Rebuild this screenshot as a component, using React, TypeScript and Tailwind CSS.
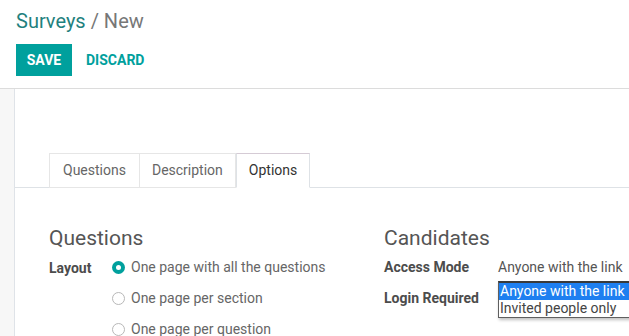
import React from 'react'

function Radio({ checked }: { checked?: boolean }) {
  return checked ? (
    <span className="flex h-[13px] w-[13px] items-center justify-center rounded-full bg-[#00A09D]">
      <span className="h-[5px] w-[5px] rounded-full bg-white" />
    </span>
  ) : (
    <span className="h-[13px] w-[13px] rounded-full border border-[#b8b8b8] bg-white" />
  )
}

const layoutOptions = [
  { label: 'One page with all the questions', checked: true },
  { label: 'One page per section' },
  { label: 'One page per question' },
]

export default function App() {
  return (
    <div className="relative h-[336px] w-[629px] overflow-hidden bg-white font-['Roboto',sans-serif] text-[14px] text-[#666]">
      {/* Control panel */}
      <div className="border-b border-[#dcdcdc] px-4 pt-[9px] pb-[12px]">
        <div className="h-[25px] text-[20px] leading-[25px]">
          <span className="text-[#1f817e]">Surveys</span>
          <span className="text-[#777]"> / New</span>
        </div>
        <div className="mt-[10px] flex items-center gap-[1px]">
          <button className="h-8 w-[56px] bg-[#00A09D] text-[14px] font-bold text-white">SAVE</button>
          <button className="h-8 px-[13px] text-[14px] font-bold text-[#00A09D]">DISCARD</button>
        </div>
      </div>

      {/* Body */}
      <div className="flex h-full">
        <div className="w-[15px] border-r border-[#dfe3e8] bg-[#f7f7f7]" />
        <div className="flex-1">
          {/* Tabs */}
          <div className="mt-[64px] flex border-b border-[#dee2e6] pl-[34px]">
            <div className="-mb-px flex h-[35px] items-center border border-[#e6e6e6] px-[13px] text-[#666]">Questions</div>
            <div className="-mb-px flex h-[35px] items-center border-y border-r border-[#e6e6e6] px-[12px] text-[#666]">Description</div>
            <div className="-mb-px flex h-[35px] items-center border border-b-white border-x-[#dee2e6] border-t-[#d5cbd5] bg-white px-[12px] text-[#333]">Options</div>
          </div>

          {/* Options content */}
          <div className="mt-[38px] flex pl-[34px]">
            <div className="w-[335px]">
              <div className="h-6 text-[21px] leading-6 text-[#555]">Questions</div>
              <div className="mt-[2px] flex">
                <div className="w-[63px] pt-[6px] font-bold text-[#4c4c4c]">Layout</div>
                <div className="flex flex-col">
                  {layoutOptions.map((o) => (
                    <div key={o.label} className="flex h-[31px] items-center gap-[6px]">
                      <Radio checked={o.checked} />
                      <span className="text-[#666]">{o.label}</span>
                    </div>
                  ))}
                </div>
              </div>
            </div>
            <div className="flex-1">
              <div className="h-6 text-[21px] leading-6 text-[#555]">Candidates</div>
              <div className="mt-[2px] flex h-[31px] items-center">
                <div className="w-[114px] font-bold text-[#4c4c4c]">Access Mode</div>
                <div className="whitespace-nowrap text-[#555]">Anyone with the link</div>
              </div>
              <div className="flex h-[31px] items-center">
                <div className="w-[114px] font-bold text-[#4c4c4c]">Login Required</div>
              </div>
            </div>
          </div>
        </div>
      </div>

      {/* Open select dropdown */}
      <div className="absolute top-[281px] left-[498px] w-[150px] border border-t-2 border-[#5f5f5f] border-t-[#3a3a3a] bg-white text-[14px] leading-[17px] shadow-[1px_2px_3px_rgba(0,0,0,0.25)]">
        <div className="bg-[#1e7ff0] pl-[1px] text-white">Anyone with the link</div>
        <div className="pl-[1px] text-[#444]">Invited people only</div>
      </div>
    </div>
  )
}
